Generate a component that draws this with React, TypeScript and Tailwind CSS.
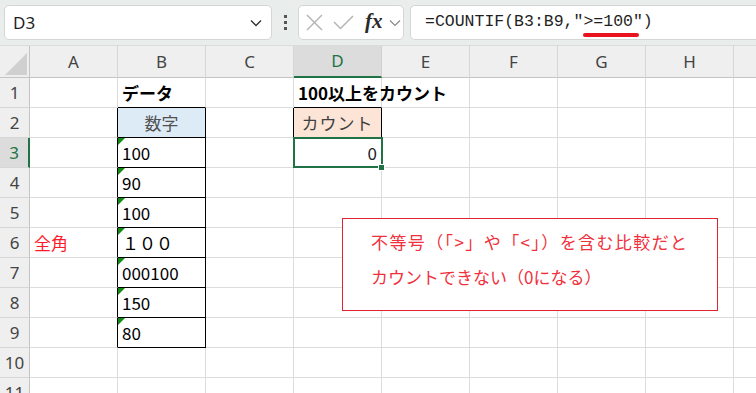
import React from "react";

const COLS = ["A", "B", "C", "D", "E", "F", "G", "H", "I"];
const ROWS = [1, 2, 3, 4, 5, 6, 7, 8, 9, 10, 11];

const BVALUES: Record<number, string> = {
  3: "100",
  4: "90",
  5: "100",
  6: "１００",
  7: "000100",
  8: "150",
  9: "80",
};

function Tri() {
  return (
    <svg className="absolute left-0 top-0" width="7" height="7" viewBox="0 0 7 7">
      <polygon points="0,0 7,0 0,7" fill="#128a14" />
    </svg>
  );
}

function Cell({ r, c }: { r: number; c: string }) {
  let rBlack = false;
  let bBlack = false;
  let bg = "";
  let content: React.ReactNode = null;
  let align = "justify-start";
  let extra: React.ReactNode = null;

  if (c === "A" && r >= 2 && r <= 9) rBlack = true;
  if (c === "B" && r >= 2 && r <= 9) {
    rBlack = true;
    bBlack = true;
  }
  if (c === "B" && r === 1) bBlack = true;
  if (c === "C" && r === 2) rBlack = true;
  if (c === "D" && r === 1) bBlack = true;
  if (c === "D" && r === 2) {
    rBlack = true;
    bBlack = true;
  }

  if (c === "B" && r === 1) content = <span className="font-bold">データ</span>;
  if (c === "D" && r === 1) content = <span className="font-bold">100以上をカウント</span>;
  if (c === "B" && r === 2) {
    bg = "bg-[#ddebf7]";
    align = "justify-center";
    content = <span className="text-[#505050]">数字</span>;
  }
  if (c === "D" && r === 2) {
    bg = "bg-[#fce4d6]";
    align = "justify-center";
    content = <span className="text-[#404040] tracking-[1px]">カウント</span>;
  }
  if (c === "B" && r >= 3 && r <= 9) {
    content = <span>{BVALUES[r]}</span>;
    extra = <Tri />;
  }
  if (c === "A" && r === 6) content = <span className="text-[#ff1a2a]">全角</span>;
  if (c === "D" && r === 3) {
    align = "justify-end";
    content = <span className="text-[#222]">0</span>;
    extra = (
      <>
        <div className="absolute z-10 left-[-1px] top-[-1px] w-[90px] h-[31px] border-2 border-[#217346]" />
        <div className="absolute z-20 left-[84px] top-[26px] w-[7px] h-[7px] bg-[#217346] border border-white" />
      </>
    );
  }

  return (
    <div
      className={`relative h-[30px] flex items-center px-[4px] whitespace-nowrap text-[17px] text-black border-r border-b ${
        rBlack ? "border-r-black" : "border-r-[#dcdcdc]"
      } ${bBlack ? "border-b-black" : "border-b-[#dcdcdc]"} ${bg} ${align}`}
    >
      {content}
      {extra}
    </div>
  );
}

export default function App() {
  return (
    <div className="w-[756px] h-[393px] overflow-hidden bg-white font-['Noto_Sans_CJK_JP',sans-serif]">
      {/* Formula bar */}
      <div className="h-[46px] bg-[#e9edeb] flex items-start pt-[5px] pl-[4px] border-b border-[#d9dcdb]">
        <div className="w-[268px] h-[35px] bg-white rounded-[5px] border border-[#d3d6d4] flex items-center justify-between pl-[8px] pr-[9px]">
          <span className="text-[17px] text-[#1f1f1f] font-['Noto_Sans',sans-serif]">D3</span>
          <svg width="12" height="8" viewBox="0 0 12 8">
            <polyline points="1,1.5 6,6.5 11,1.5" fill="none" stroke="#333" strokeWidth="1.4" />
          </svg>
        </div>
        <div className="w-[26px] h-[35px] flex flex-col items-center justify-center gap-[3px]">
          <div className="w-[3px] h-[3px] bg-[#555]" />
          <div className="w-[3px] h-[3px] bg-[#555]" />
          <div className="w-[3px] h-[3px] bg-[#555]" />
        </div>
        <div className="w-[106px] h-[35px] bg-white rounded-[5px] border border-[#d3d6d4] flex items-center pl-[7px]">
          <svg width="17" height="17" viewBox="0 0 17 17">
            <line x1="1" y1="1" x2="16" y2="16" stroke="#b5b5b5" strokeWidth="1.5" />
            <line x1="16" y1="1" x2="1" y2="16" stroke="#b5b5b5" strokeWidth="1.5" />
          </svg>
          <svg className="ml-[10px]" width="21" height="15" viewBox="0 0 21 15">
            <polyline points="1,7 7.5,13.5 20,1" fill="none" stroke="#b5b5b5" strokeWidth="1.5" />
          </svg>
          <span className="ml-[11px] text-[21px] leading-none italic font-bold text-[#2a2a2a] font-['Liberation_Serif',serif] -mt-[2px]">
            fx
          </span>
          <svg className="ml-[6px]" width="12" height="8" viewBox="0 0 12 8">
            <polyline points="1,1.5 6,6.5 11,1.5" fill="none" stroke="#8a8a8a" strokeWidth="1.2" />
          </svg>
        </div>
        <div className="relative ml-[6px] flex-1 h-[35px] bg-white rounded-l-[5px] border border-r-0 border-[#d3d6d4] flex items-center pl-[14px]">
          <span className="text-[16.5px] text-[#1f1f1f] font-['Liberation_Mono',monospace] whitespace-nowrap">
            =COUNTIF(B3:B9,"&gt;=100")
          </span>
          <div className="absolute left-[172px] top-[27px] w-[56px] h-[4px] rounded-full bg-[#e8131f]" />
        </div>
      </div>

      {/* Grid */}
      <div className="relative">
        <div className="grid grid-cols-[30px_repeat(9,88px)]">
          {/* header row */}
          <div className="h-[32px] bg-[#efefef] border-r border-b border-r-[#c4c4c4] border-b-[#c4c4c4] relative">
            <svg className="absolute left-[5px] top-[7px]" width="22" height="22" viewBox="0 0 22 22">
              <polygon points="22,0 22,22 0,22" fill="#d0d0d0" />
            </svg>
          </div>
          {COLS.map((c) =>
            c === "D" ? (
              <div
                key={c}
                className="h-[32px] bg-[#dcdcdc] border-r border-r-[#d0d0d0] border-b-2 border-b-[#217346] flex items-center justify-center text-[17px] text-[#217346] font-['Noto_Sans',sans-serif]"
              >
                {c}
              </div>
            ) : (
              <div
                key={c}
                className="h-[32px] bg-[#efefef] border-r border-b border-r-[#d6d6d6] border-b-[#c4c4c4] flex items-center justify-center text-[17px] text-[#444] font-['Noto_Sans',sans-serif]"
              >
                {c === "I" ? "" : c}
              </div>
            )
          )}
          {ROWS.map((r) => (
            <React.Fragment key={r}>
              {r === 3 ? (
                <div className="h-[30px] bg-[#dcdcdc] border-r-2 border-b border-r-[#217346] border-b-[#d6d6d6] flex items-center justify-center text-[17px] text-[#217346] font-['Noto_Sans',sans-serif]">
                  {r}
                </div>
              ) : (
                <div className="h-[30px] bg-[#efefef] border-r border-b border-r-[#c4c4c4] border-b-[#d6d6d6] flex items-center justify-center text-[17px] text-[#444] font-['Noto_Sans',sans-serif]">
                  {r}
                </div>
              )}
              {COLS.map((c) => (
                <Cell key={c} r={r} c={c} />
              ))}
            </React.Fragment>
          ))}
        </div>

        {/* Text box shape */}
        <div className="absolute z-30 left-[342px] top-[172px] w-[376px] h-[93px] bg-white border border-[#e0242f] pl-[28px] pt-[5px] text-[17px] leading-[35px] text-[#f0303c] whitespace-nowrap">
          <div className="tracking-[1.4px]">不等号（「&gt;」や「&lt;」）を含む比較だと</div>
          <div>カウントできない（0になる）</div>
        </div>
      </div>
    </div>
  );
}
